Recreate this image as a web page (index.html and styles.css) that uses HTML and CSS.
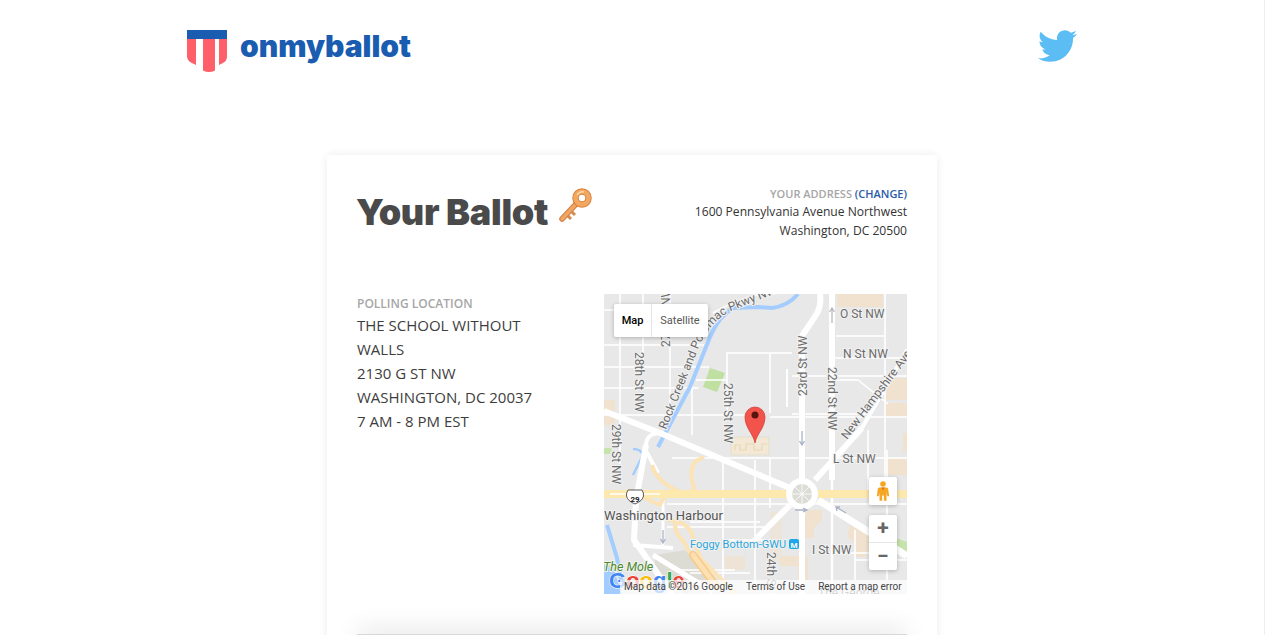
FILE: index.html
```html
<!DOCTYPE html>
<html lang="en">
<head>
<meta charset="utf-8">
<title>onmyballot</title>
<link rel="stylesheet" href="styles.css">
</head>
<body>
<div class="page">
  <header class="site-header">
    <a class="brand" href="#">
      <svg class="shield" viewBox="0 0 40 42" aria-hidden="true">
        <path fill="#ff5f68" d="M0 9h9v26l-5-2.500q-4-2.500-4-6.500z"/>
        <path fill="#ff5f68" d="M16 9h12v31.500q-6 3-12 0z"/>
        <path fill="#ff5f68" d="M32 9h8v17.500q0 4-4 6.500l-4 2z"/>
        <rect fill="#1a5cb0" width="40" height="9"/>
      </svg>
      <span class="brand-name">onmyballot</span>
    </a>
    <svg class="twitter" viewBox="0 2.400 24 19.200" aria-hidden="true">
      <path fill="#5bbdf3" d="M23.954 4.569c-.885.389-1.83.654-2.825.775 1.014-.611 1.794-1.574 2.163-2.723-.951.555-2.005.959-3.127 1.184-.896-.959-2.173-1.559-3.591-1.559-2.717 0-4.92 2.203-4.92 4.917 0 .39.045.765.127 1.124C7.691 8.094 4.066 6.13 1.64 3.161c-.427.722-.666 1.561-.666 2.475 0 1.71.87 3.213 2.188 4.096-.807-.026-1.566-.248-2.228-.616v.061c0 2.385 1.693 4.374 3.946 4.827-.413.111-.849.171-1.296.171-.314 0-.615-.03-.916-.086.631 1.953 2.445 3.377 4.604 3.417-1.68 1.319-3.809 2.105-6.102 2.105-.39 0-.779-.023-1.17-.067 2.189 1.394 4.768 2.209 7.557 2.209 9.054 0 13.999-7.496 13.999-13.986 0-.209 0-.42-.015-.63.961-.689 1.8-1.56 2.46-2.548l-.047-.02z"/>
    </svg>
  </header>

  <main class="card">
    <section class="card-head">
      <h1 class="title">Your Ballot
        <svg class="key" viewBox="0 0 36 36" aria-hidden="true">
          <path fill="none" stroke="#d98a4a" stroke-width="3" d="M10 27l4 4M14 23l4 4"/>
          <path fill="none" stroke="#d07f42" stroke-width="5.500" stroke-linecap="round" d="M20 15 5 31"/>
          <path fill="none" stroke="#f0a662" stroke-width="3.500" stroke-linecap="round" d="M20 15 5 31"/>
          <circle cx="25" cy="10" r="6.500" fill="none" stroke="#d9823f" stroke-width="6.500"/>
          <circle cx="25" cy="10" r="6.500" fill="none" stroke="#f2a860" stroke-width="4.500"/>
          <path fill="none" stroke="#fbd7a6" stroke-width="1.400" d="M20 7q3-4 7-3"/>
        </svg>
      </h1>
      <div class="address">
        <div class="label label-small">YOUR ADDRESS <a class="change" href="#">(CHANGE)</a></div>
        <div>1600 Pennsylvania Avenue Northwest</div>
        <div>Washington, DC 20500</div>
      </div>
    </section>

    <section class="polling">
      <div class="location">
        <div class="label">POLLING LOCATION</div>
        <div>THE SCHOOL WITHOUT WALLS</div>
        <div>2130 G ST NW</div>
        <div>WASHINGTON, DC 20037</div>
        <div>7 AM - 8 PM EST</div>
      </div>
      <div class="map">
        <svg class="map-canvas" viewBox="604 294 303 300" aria-label="Map">
          <defs>
            <path id="rock-creek" d="M666 430 L697 352 Q708 322 733 310 L790 288"/>
          </defs>
          <rect x="604" y="294" width="303" height="300" fill="#e8e8e8"/>
          <!-- land use -->
          <g fill="#f0e2cf">
            <rect x="604" y="400" width="11" height="25"/>
            <rect x="837" y="294" width="46" height="13"/>
            <rect x="885" y="378" width="22" height="22"/>
            <rect x="885" y="403" width="22" height="14"/>
            <rect x="903" y="433" width="4" height="18"/>
            <rect x="885" y="458" width="22" height="17"/>
            <path d="M808 510h14v10l-8 8v10h-14v-16z"/>
            <path d="M850 525l25 12-10 20h-10v-14l-8-6z"/>
            <path d="M780 556h28v24h-10v-14h-18z"/>
            <path d="M770 512h12v50h-12z" opacity=".6"/>
            <path d="M725 556h20v14h-20z" opacity=".7"/>
          </g>
          <path fill="#dddcd4" d="M655 555l30-5 30 32-30 12-30-25z"/>
          <path fill="#bfe0a0" d="M710 368l15 5-8 19-14-5z"/>
          <path fill="#c6e3ac" d="M604 448h8l-2 6h-6zM884 534l23 8v10l-23-6zM604 565h10v6h-10z"/>
          <!-- minor streets -->
          <g fill="none" stroke="#fff" stroke-width="1.600">
            <path d="M604 345h100M604 367h105M604 388h95M604 415h140M604 310h60"/>
            <path d="M620 294v170M643 294v70M670 294v125M692 380v55"/>
            <path d="M696 380h30M727 415v-62h65M728 353h64M792 376h115M770 353v60M792 414h75"/>
            <path d="M770 417H907M836 336h48M833 358h74M885 294v190M833 380h25l30 24"/>
            <path d="M672 458h235M723 460v130M755 460v130M770 458v50M795 458H770M868 430v60"/>
            <path d="M667 504h240M667 527h100M690 522h70M835 553h72M855 530v50M690 573h60M723 540h40M855 560h52"/>
            <path d="M887 450v130M675 570h60"/>
            <path d="M713 313q20-12 47-19"/>
          </g>
          <path fill="none" stroke="#fff" stroke-width="2" d="M787 369v38"/>
          <!-- water -->
          <path fill="#a3ccff" d="M604 594v-30q6 4 10 6l8 24z"/>
          <path fill="none" stroke="#a3ccff" stroke-width="4" d="M798 294q-10 12-26 14l-14-1-25 1q-14 8-23 29l-20 50-23 43-9 17"/>
          <path fill="none" stroke="#a3ccff" stroke-width="4" d="M607 525l10 33q2 14 6 30"/>
          <path fill="none" stroke="#a3ccff" stroke-width="2.500" d="M633 449q8 0 10 6l-10 20"/>
          <!-- main roads -->
          <g fill="none" stroke="#fff" stroke-linecap="butt">
            <path stroke-width="6" d="M604 411 660 433 790 488"/>
            <path stroke-width="7" d="M818 500 907 556"/>
            <path stroke-width="6" d="M820 294q2 14-6 24l-12 18V594"/>
            <path stroke-width="6" d="M832 294V480"/>
            <path stroke-width="2.500" d="M832 480V594"/>
            <path stroke-width="6" d="M815 480 862 428"/>
            <path stroke-width="4" d="M862 428 907 350"/>
            <path stroke-width="6" d="M790 505 750 545"/>
            <path stroke-width="4" d="M660 433q-16 0-14 18l12 22"/>
            <path stroke-width="6" d="M646 445 636 500 634 540 672 594"/>
            <path stroke-width="4" d="M633 545 673 548"/>
            <path stroke-width="5" d="M653 555 713 592"/>
            <path stroke-width="3" d="M663 495V545"/>
          </g>
          <!-- freeway and ramps -->
          <g fill="none" stroke="#fce3b5" stroke-width="4">
            <path d="M652 465q4 16 26 26 12 8 16-4-6-18 2-26l8-4"/>
            <path d="M628 490 660 505 668 490"/>
            <path d="M666 520q20 0 26 14l8 24 36 36"/>
            <path d="M676 520q-4 10 8 22l10 18"/>
          </g>
          <path stroke="#fde8ad" stroke-width="8" d="M604 494H788M818 494H907"/>
          <path stroke="#fff" stroke-width="1.600" d="M610 494h50"/>
          <path stroke="#f8c98d" stroke-width="8" stroke-linecap="round" d="M693 555 716 586"/>
          <path stroke="#fce0b0" stroke-width="5" stroke-linecap="round" d="M693 555 716 586"/>
          <!-- roundabout -->
          <circle cx="802" cy="494" r="16" fill="#fff"/>
          <circle cx="802" cy="494" r="10" fill="#dcdcd6"/>
          <path fill="none" stroke="#fff" stroke-width=".8" d="M792 494h20M802 484v20M795 487l14 14M809 487l-14 14"/>
          <!-- school grounds -->
          <path fill="#f2e8d5" stroke="#ddd6c4" stroke-width=".6" d="M731 437h38v18h-38z"/>
          <path fill="none" stroke="#e8d8b5" stroke-width="1.200" d="M735 450v-5h5v5h6v-6h8v6h8v-6h5"/>
          <!-- arrows -->
          <g fill="none" stroke="#aab3c7" stroke-width="1.300">
            <path d="M802 431v14M799.500 441l2.500 4 2.500-4"/>
            <path d="M832 308v15M829.500 312l2.500-4 2.500 4" stroke="#bbb"/>
            <path d="M663 530v13M660.500 539l2.500 4 2.500-4"/>
            <path d="M795 510h12M803 508l4 2-4 2"/>
            <path d="M836 507l10 6M837 511l-1-4 4 0"/>
          </g>
          <!-- labels -->
          <g class="map-label">
            <text transform="translate(635 352) rotate(90)">28th St NW</text>
            <text transform="translate(612 424) rotate(90)">29th St NW</text>
            <text transform="translate(670 347) rotate(-90)">27th St NW</text>
            <text transform="translate(724 383) rotate(90)">25th St NW</text>
            <text><textPath href="#rock-creek">Rock Creek and Potomac Pkwy NW</textPath></text>
            <text transform="translate(807 396) rotate(-90)">23rd St NW</text>
            <text transform="translate(828 367) rotate(90)">22nd St NW</text>
            <text transform="translate(847 440) rotate(-53)">New Hampshire Ave</text>
            <text x="840" y="318">O St NW</text>
            <text x="843" y="358">N St NW</text>
            <text x="833" y="463">L St NW</text>
            <text x="812" y="554">I St NW</text>
            <text class="map-town" x="604" y="520">Washington Harbour</text>
            <text class="map-metro" x="690" y="548">Foggy Bottom-GWU</text>
            <text class="map-park" x="603" y="571">The Mole</text>
            <text transform="translate(767 552) rotate(90)">24th St NW</text>
            <text x="818" y="597">The George</text>
          </g>
          <!-- US 29 shield -->
          <path fill="#fff" stroke="#333" stroke-width=".8" d="M628 490h14q2 3 1.500 6-1 5-8.500 8-7.500-3-8.500-8-.5-3 1.500-6z"/>
          <text class="map-shield" x="635" y="502" text-anchor="middle">29</text>
          <!-- metro badge -->
          <rect x="789" y="539" width="10" height="10" rx="2" fill="#1ea7e8"/>
          <text class="map-m" x="794" y="547.500" text-anchor="middle">M</text>
          <!-- pin -->
          <path fill="#f2544c" stroke="#c9392f" stroke-width=".7" d="M755 443c-1.500-9-10-15-10-26a10 10 0 0 1 20 0c0 11-8.500 17-10 26z"/>
          <circle cx="755" cy="415" r="3.500" fill="#5a1410"/>
          <!-- google -->
          <text class="map-google" x="609" y="588"><tspan fill="#4285f4">G</tspan><tspan fill="#ea4335">o</tspan><tspan fill="#fbbc05">o</tspan><tspan fill="#4285f4">g</tspan><tspan fill="#34a853">l</tspan><tspan fill="#ea4335">e</tspan></text>
        </svg>
        <div class="map-type">
          <span class="map-type-on">Map</span>
          <span class="map-type-off">Satellite</span>
        </div>
        <div class="ctl pegman">
          <svg viewBox="0 0 16 24" width="14" height="22" aria-hidden="true">
            <circle cx="8" cy="4" r="3.200" fill="#f5a623"/>
            <path fill="#f5a623" d="M4 8h8q2 0 2 2l1 8h-2l-1-4v9H9v-6H7v6H4v-9l-1 4H1l1-8q0-2 2-2z"/>
            <path fill="#e2701a" d="M6 8h4l-2 3z"/>
          </svg>
        </div>
        <div class="ctl zoom">
          <span class="zoom-btn">+</span>
          <span class="zoom-btn">&minus;</span>
        </div>
        <div class="attrib">
          <span>Map data &copy;2016 Google</span>
          <span>Terms of Use</span>
          <span>Report a map error</span>
        </div>
      </div>
    </section>

    <div class="next"></div>
  </main>
</div>
</body>
</html>
```
FILE: styles.css
```css
* { box-sizing: border-box; }
html, body { margin: 0; height: 100%; overflow: hidden; background: #fff; }
body { font-family: "Open Sans", "Liberation Sans", sans-serif; color: #444; }
.page { width: 1265px; height: 635px; border-right: 1px solid #eee; overflow: hidden; }

.site-header { width: 890px; padding-top: 30px; height: 155px; margin-left: 187px; display: flex; justify-content: space-between; align-items: flex-start; }
.brand { display: flex; align-items: flex-start; gap: 13px; text-decoration: none; }
.shield { width: 40px; height: 42px; display: block; }
.brand-name { font-family: Inter, "Liberation Sans", sans-serif; font-weight: 900; font-size: 30px; line-height: 33px; color: #1a5cb0; }
.twitter { width: 39px; height: 32px; display: block; }

.card { width: 610px; margin-left: 327px; padding: 30px; background: #fff; border-radius: 4px; box-shadow: 0 0 10px rgba(0,0,0,.08); }
.card-head { display: flex; justify-content: space-between; align-items: flex-start; height: 109px; }
.title { margin: 0 0 0 -1px; display: flex; align-items: center; gap: 9px; font-family: Inter, "Liberation Sans", sans-serif; font-weight: 900; font-size: 36px; line-height: 54px; letter-spacing: -.3px; color: #4a4a4a; }
.key { width: 36px; height: 36px; margin-top: -12px; }
.address { text-align: right; font-size: 12.100px; line-height: 19px; color: #333; }
.label { font-size: 12px; font-weight: 600; line-height: 19px; color: #a6a6a6; }
.label-small { font-size: 11px; line-height: 17px; }
.change { color: #2a5ca8; text-decoration: none; }

.polling { display: flex; justify-content: space-between; align-items: flex-start; }
.location { width: 200px; font-size: 15px; line-height: 24px; color: #3d3d3d; }

.map { position: relative; width: 303px; height: 300px; overflow: hidden; font-family: Roboto, "Liberation Sans", sans-serif; }
.map-canvas { display: block; width: 303px; height: 300px; }
.map-label text { font-family: Roboto, "Liberation Sans", sans-serif; font-size: 12px; fill: #6b6b6b; stroke: #f2f2f2; stroke-width: 2px; paint-order: stroke; }
.map-label .map-town { font-size: 13px; fill: #555; }
.map-label .map-metro { font-size: 11px; fill: #2ba5dc; }
.map-label .map-park { font-size: 12.500px; fill: #4d8b2f; font-style: italic; }
.map-shield { font-family: Roboto, sans-serif; font-size: 8px; font-weight: 700; fill: #222; }
.map-m { font-family: Roboto, sans-serif; font-size: 8px; font-weight: 700; fill: #fff; }
.map-google { font-family: "Liberation Sans", sans-serif; font-size: 22px; font-weight: 700; stroke: #fff; stroke-width: 1px; paint-order: stroke; }

.map-type { position: absolute; left: 10px; top: 10px; display: flex; height: 33px; background: #fff; border-radius: 2px; box-shadow: 0 1px 4px rgba(0,0,0,.25); font-size: 11px; line-height: 33px; }
.map-type-on { width: 38px; text-align: center; color: #000; font-weight: 500; border-right: 1px solid #e6e6e6; }
.map-type-off { width: 56px; text-align: center; color: #565656; }
.ctl { position: absolute; left: 265px; width: 28px; background: #fff; border-radius: 2px; box-shadow: 0 1px 4px rgba(0,0,0,.25); }
.pegman { top: 183px; height: 28px; display: flex; align-items: center; justify-content: center; }
.zoom { top: 221px; height: 55px; display: flex; flex-direction: column; color: #666; }
.zoom-btn { flex: 1; display: flex; align-items: center; justify-content: center; font-size: 21px; font-weight: 700; line-height: 1; }
.zoom-btn + .zoom-btn { border-top: 1px solid #e6e6e6; }
.attrib { position: absolute; left: 16px; right: 0; bottom: 0; height: 14px; padding-left: 4px; display: flex; gap: 13px; background: rgba(255,255,255,.72); font-size: 10px; line-height: 14px; color: #444; white-space: nowrap; }

.next { margin-top: 40px; height: 20px; border-top: 1px solid #d8d8d8; box-shadow: 0 -6px 26px -2px rgba(0,0,0,.12); }
```
